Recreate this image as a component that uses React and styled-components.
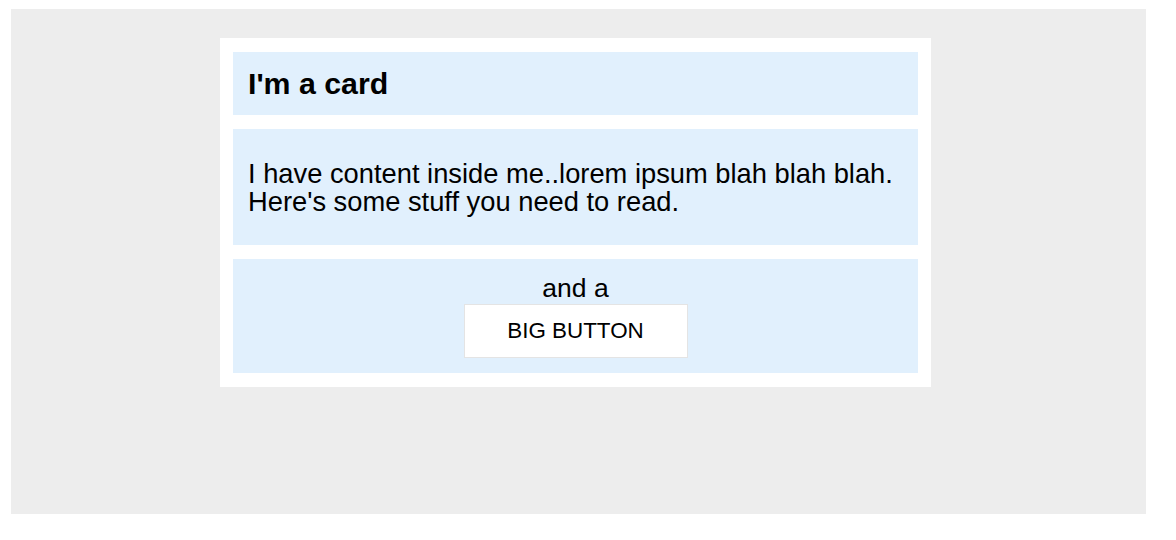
import styled, { createGlobalStyle } from 'styled-components';

const GlobalStyle = createGlobalStyle`
  body {
    margin: 0;
    background: #ffffff;
    font-family: "Liberation Sans", Arial, Helvetica, sans-serif;
    color: #000;
  }
`

const Stage = styled.div`
  margin: 9px 0 0 11px;
  width: 1135px;
  height: 505px;
  background: #ededed;
  padding: 29px 0 0 209px;
  box-sizing: border-box;
`

const Card = styled.div`
  width: 711px;
  box-sizing: border-box;
  background: #fff;
  padding: 14px 13px;
  display: flex;
  flex-direction: column;
  gap: 14px;
`

const Section = styled.div`
  background: #e1f0fd;
  padding: ${p => p.$pad || '0 15px'};
  text-align: ${p => p.$center ? 'center' : 'left'};
`

const Title = styled.h2`
  margin: 0;
  height: 63px;
  display: flex;
  align-items: center;
  font-size: 30.3px;
  font-weight: bold;
`

const Body = styled.p`
  margin: 0;
  font-size: 27.3px;
  line-height: 28px;
`

const Footer = styled.div`
  display: flex;
  flex-direction: column;
  align-items: center;
  font-size: 26.5px;
`

const BigButton = styled.button`
  width: 224px;
  height: 54px;
  background: #fff;
  border: 1px solid #e4e4e4;
  font-family: inherit;
  font-size: 22.4px;
  color: #000;
`

export default function App() {
  return (
    <>
      <GlobalStyle />
      <Stage>
        <Card>
          <Section>
            <Title>I'm a card</Title>
          </Section>
          <Section $pad="31px 15px 29px">
            <Body>
              I have content inside me..lorem ipsum blah blah blah.
              Here's some stuff you need to read.
            </Body>
          </Section>
          <Section $pad="14px 15px 15px" $center>
            <Footer>
              <span>and a</span>
              <BigButton type="button">BIG BUTTON</BigButton>
            </Footer>
          </Section>
        </Card>
      </Stage>
    </>
  );
}
